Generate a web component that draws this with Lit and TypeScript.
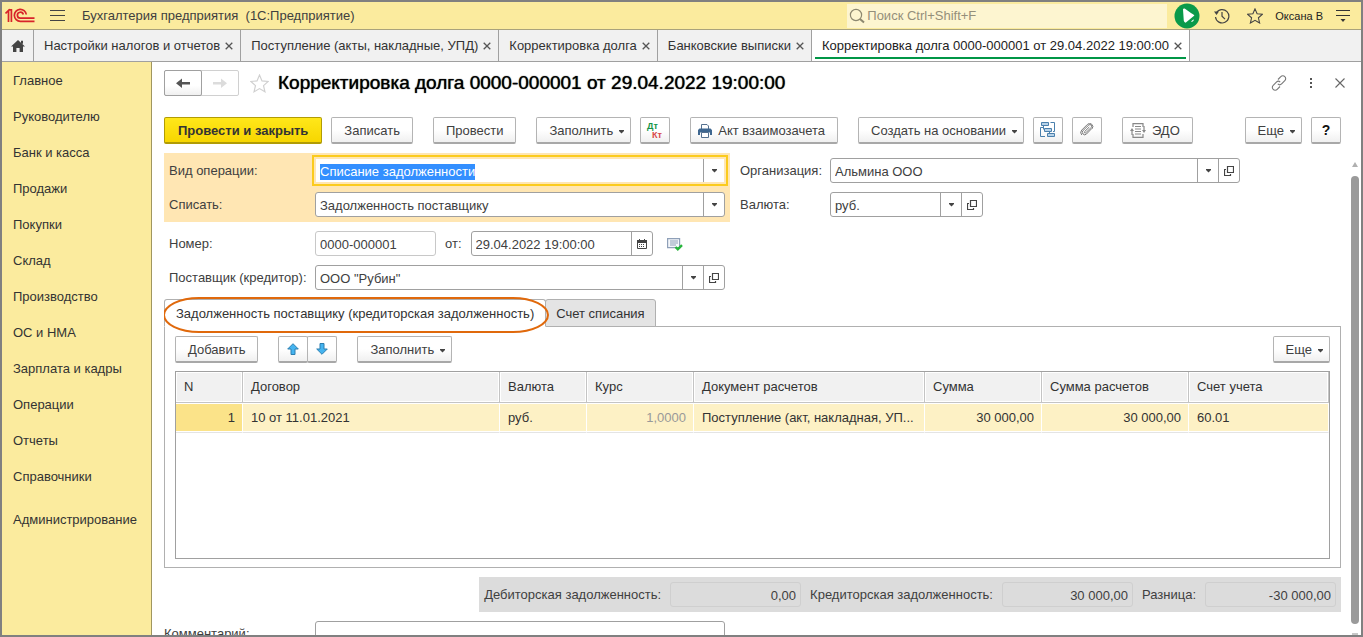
import { LitElement, html, css, svg, nothing } from "lit";
import { customElement } from "lit/decorators.js";
import { classMap } from "lit/directives/class-map.js";

const sections = [
  "Главное", "Руководителю", "Банк и касса", "Продажи", "Покупки", "Склад",
  "Производство", "ОС и НМА", "Зарплата и кадры", "Операции", "Отчеты",
  "Справочники", "Администрирование",
];

const windows = [
  "Настройки налогов и отчетов",
  "Поступление (акты, накладные, УПД)",
  "Корректировка долга",
  "Банковские выписки",
  "Корректировка долга 0000-000001 от 29.04.2022 19:00:00",
];

const columns = [
  { key: "n", title: "N" },
  { key: "contract", title: "Договор" },
  { key: "currency", title: "Валюта" },
  { key: "rate", title: "Курс" },
  { key: "doc", title: "Документ расчетов" },
  { key: "sum", title: "Сумма" },
  { key: "settle", title: "Сумма расчетов" },
  { key: "account", title: "Счет учета" },
];

const rows: Record<string, string>[] = [
  {
    n: "1",
    contract: "10 от 11.01.2021",
    currency: "руб.",
    rate: "1,0000",
    doc: "Поступление (акт, накладная, УП...",
    sum: "30 000,00",
    settle: "30 000,00",
    account: "60.01",
  },
];

const icon = (w: number, h: number, body: unknown) =>
  html`<svg width=${w} height=${h} viewBox="0 0 ${w} ${h}" fill="none" aria-hidden="true">${body}</svg>`;

const caret = icon(5, 4, svg`<path d="M0 0h5v1L2.5 3.5 0 1z" fill="#444"/>`);
const cross = icon(8, 8, svg`<path d="M.7.7l6.6 6.6M7.3.7L.7 7.3" stroke="#555" stroke-width="1.3"/>`);
const openIcon = icon(10, 10, svg`<path d="M3.5.5h6v6h-6zM2 3.5H.5v6h6V8" stroke="#444" stroke-width="1.2"/>`);
const calendarIcon = icon(10, 10, svg`<path d="M.5 2h9v7.5h-9z" stroke="#444"/><path d="M0 1h10v3H0zM2 0h1v2H2zM7 0h1v2H7z" fill="#444"/><path d="M2 5.5h6M2 7.5h6" stroke="#444" stroke-dasharray="1 1"/>`);
const starPath = "M8 .9l2.1 4.9 5.2.5-3.9 3.5 1.2 5.2L8 12.3l-4.6 2.7 1.2-5.2L.7 6.3l5.2-.5z";

@customElement("app-root")
export class AppRoot extends LitElement {
  static styles = css`
    :host {
      display: block;
      font: 13px/16px "Liberation Sans", Arial, sans-serif;
      color: #404040;
    }
    * { box-sizing: border-box; }
    button, input { font: inherit; color: inherit; margin: 0; }
    button { padding: 0; background: none; border: 0; cursor: pointer; }
    a { color: inherit; text-decoration: none; }
    svg { display: block; flex: none; }

    .window {
      display: flex;
      flex-direction: column;
      height: 100vh;
      border: 2px solid #808080;
      background: #fff;
      overflow: hidden;
    }

    .titlebar {
      display: flex;
      align-items: center;
      flex: none;
      height: 28px;
      padding: 0 11px 0 3px;
      background: #fbeb9e;
      border-bottom: 1px solid #a9a27c;
    }
    .menu { margin: 0 17px 0 15px; }
    .app-name { flex: 1; white-space: pre; }
    .search {
      display: flex;
      align-items: center;
      gap: 2px;
      width: 320px;
      height: 24px;
      padding-left: 2px;
      background: #fdf5d0;
    }
    .search input {
      flex: 1;
      min-width: 0;
      padding: 0;
      border: 0;
      outline: 0;
      background: none;
    }
    .search input::placeholder { color: #948f7a; opacity: 1; }
    .system { display: flex; align-items: center; margin-left: 7px; }
    .history { margin-left: 14px; }
    .favorites { margin-left: 17px; }
    .user { margin: 0 13px 0 12px; font-size: 11px; color: #222; }

    .tabs {
      display: flex;
      flex: none;
      height: 32px;
      background: #f1f1f1;
      border-bottom: 1px solid #a0a0a0;
    }
    .home {
      display: flex;
      align-items: center;
      justify-content: center;
      width: 32px;
      border-right: 1px solid #a0a0a0;
    }
    .tab {
      display: flex;
      align-items: center;
      gap: 5px;
      padding: 0 7px 0 10px;
      border-right: 1px solid #a0a0a0;
      white-space: nowrap;
      color: #333;
    }
    .tab.active {
      background: linear-gradient(#009646, #009646) 3px 27px / calc(100% - 6px) 2px no-repeat #fff;
      color: #222;
    }

    .body { display: flex; flex: 1; min-height: 0; }
    .sections {
      display: flex;
      flex-direction: column;
      flex: none;
      width: 150px;
      padding: 1px 0 0 11px;
      background: #fbeb9e;
      border-right: 1px solid #a0965f;
    }
    .sections a { line-height: 36px; color: #333; white-space: nowrap; }
    .sections a:last-child { margin-top: 7px; }

    .form {
      display: flex;
      flex-direction: column;
      flex: 1;
      min-width: 0;
      padding: 9px 2px 0 12px;
    }
    .heading { display: flex; align-items: center; height: 24px; margin-right: 14px; }
    .nav {
      display: flex;
      margin-right: 11px;
      border: 1px solid #d0d0d0;
      border-radius: 2px;
    }
    .nav button { display: flex; align-items: center; justify-content: center; width: 36px; height: 24px; }
    .nav .back {
      width: 38px;
      margin: -1px 0 -1px -1px;
      height: 26px;
      border: 1px solid #a0a0a0;
      border-radius: 2px;
      background: linear-gradient(#fff 60%, #f0f0f0);
    }
    h1 {
      flex: 1;
      margin: 0 0 0 9px;
      font-size: 19px;
      line-height: 24px;
      font-weight: 400;
      text-shadow: 0 0 1px #000;
      color: #000;
      white-space: nowrap;
    }
    .heading .tool { margin-left: 22px; }

    .bar { display: flex; align-items: center; gap: 20px; }
    .commands { margin: 22px 18px 9px 0; }
    .group { display: flex; gap: 9px; }
    .push { margin-left: auto; }
    .btn {
      display: flex;
      align-items: center;
      justify-content: center;
      gap: 6px;
      height: 27px;
      padding: 1px 12px 0;
      border: 1px solid #b4b4b4;
      border-bottom: 2px solid #a8a8a8;
      border-radius: 2px;
      background: linear-gradient(#fff 50%, #f0f0f0);
      white-space: nowrap;
    }
    .btn.drop { padding-right: 6px; }
    .btn.drop svg { margin-top: 3px; }
    .btn.pictured { padding-left: 7px; }
    .btn.square { width: 30px; padding: 0; font-size: 14px; font-weight: 700; color: #111; }
    .btn.primary {
      padding: 1px 13px 0;
      border-color: #b19c05;
      background: linear-gradient(#ffe71a, #f7d600);
      font-weight: 700;
      color: #333;
    }
    .posting { font: 700 9px "Liberation Sans", Arial, sans-serif; }
    .moves { display: flex; }
    .moves .btn + .btn { margin-left: -1px; }

    .scroller { display: flex; flex: 1; min-height: 0; }
    .content { flex: 1; min-width: 0; overflow: hidden; }
    .scrollbar {
      display: flex;
      flex-direction: column;
      align-items: center;
      gap: 9px;
      flex: none;
      width: 8px;
      margin-left: 10px;
      padding-top: 9px;
    }
    .thumb { flex: 1; width: 8px; border-radius: 4px; background: #9a9a9a; }

    .fields { display: grid; grid-template-columns: 566px minmax(0, 500px); gap: 4px 10px; }
    .block { display: grid; gap: 9px; padding: 5px; }
    .block.marked { background: #ffe6b3; }
    .block.side { padding: 5px 0; }
    .line { display: grid; grid-template-columns: 146px minmax(0, 1fr); align-items: center; }
    .side .line { grid-template-columns: 90px minmax(0, 1fr); }
    .input {
      display: flex;
      height: 25px;
      border: 1px solid #a0a0a0;
      border-radius: 3px;
      background: #fff;
    }
    .input input {
      flex: 1;
      width: 0;
      min-width: 0;
      padding: 2px 4px 0;
      border: 0;
      outline: 0;
      background: none;
    }
    .input input::selection { background: #338fff; color: #fff; }
    .input button {
      display: flex;
      align-items: center;
      justify-content: center;
      width: 21px;
      border-left: 1px solid #a0a0a0;
    }
    .input.focused { border-color: #ffe6b3; border-radius: 0; outline: 2px solid #fbcb1d; outline-offset: 1px; }
    .input.locked { border-color: #c8c8c8; }
    .input.short { width: 153px; }
    .number { display: flex; align-items: center; }
    .number .locked { width: 121px; }
    .number label { margin: 0 9px; }
    .number .date { width: 182px; margin-right: 14px; }

    .pages { display: flex; margin-top: 4px; }
    .page {
      height: 28px;
      padding: 1px 11px 0;
      border: 1px solid #b0b0b0;
      border-radius: 3px 3px 0 0;
      background: #e4e4e4;
      color: #333;
      white-space: nowrap;
    }
    .page + .page { margin-left: -1px; padding: 1px 10px 0; }
    .page.current { position: relative; background: #fff; border-bottom-color: #fff; }
    .marker {
      position: absolute;
      inset: -3px -4px -7px -2px;
      border: 2px solid #e0690c;
      border-radius: 36px / 18px;
      pointer-events: none;
    }
    .panel { margin-top: -1px; padding: 9px 10px 8px; border: 1px solid #b0b0b0; }
    .grid { height: 188px; margin-top: 8px; border: 1px solid #a0a0a0; overflow: hidden; }
    table { width: 100%; border-collapse: separate; border-spacing: 0; table-layout: fixed; }
    th, td {
      padding: 0 7px 0 8px;
      overflow: hidden;
      text-overflow: ellipsis;
      white-space: nowrap;
      font-weight: 400;
      text-align: left;
      color: #333;
    }
    th {
      height: 31px;
      background: #f1f1f1;
      border-right: 1px solid #c4c4c4;
      border-bottom: 1px solid #c4c4c4;
      box-shadow: inset 0 0 0 1px #fff;
    }
    td {
      height: 30px;
      background: #fdf1c5;
      border-right: 1px solid #fff;
      border-bottom: 1px solid #e4e4e4;
      box-shadow: inset 0 1px #fff, inset 0 -1px #fff;
    }
    td.n { background: #fbe389; }
    td.n, td.rate, td.sum, td.settle { text-align: right; }
    td.rate { color: #999; }
    th.n { width: 67px; }
    th.contract { width: 257px; }
    th.currency { width: 87px; }
    th.rate { width: 107px; }
    th.doc { width: 231px; }
    th.sum { width: 117px; }
    th.settle { width: 147px; }

    .totals {
      display: flex;
      align-items: center;
      gap: 9px;
      width: max-content;
      height: 35px;
      margin: 9px 0 9px auto;
      padding: 0 5px;
      background: #dcdcdc;
    }
    .totals .input { width: 131px; border-color: #cfcfcf; background: none; }
    .totals input { text-align: right; }
    .comment { width: 561px; grid-template-columns: 151px minmax(0, 1fr); }
  `;

  firstUpdated() {
    const field = this.renderRoot.querySelector<HTMLInputElement>("#operation");
    field?.focus();
    field?.select();
  }

  private field(id: string, value: string, buttons: string[] = [], cls = "") {
    return html`<div class="input ${cls}">
      <input id=${id} type="text" autocomplete="off" .value=${value} ?readonly=${cls === "locked"} />
      ${buttons.map((b) =>
        b === "drop"
          ? html`<button aria-label="Выбрать">${caret}</button>`
          : b === "open"
            ? html`<button aria-label="Открыть">${openIcon}</button>`
            : html`<button aria-label="Календарь">${calendarIcon}</button>`)}
    </div>`;
  }

  private line(id: string, label: string, value: string, buttons: string[], cls = "") {
    return html`<div class="line"><label for=${id}>${label}</label>${this.field(id, value, buttons, cls)}</div>`;
  }

  private titlebar() {
    return html`<header class="titlebar">
      ${icon(30, 16, svg`<path d="M.5 5.500L3.500 2.500V14M3.500 1.800h2.900V14" stroke="#d8232a" stroke-width="1.700"/>
        <path d="M21.300 6.500A6 6 0 1 0 15.300 13.300H29.500" stroke="#d8232a" stroke-width="1.700"/>
        <path d="M18.300 6.500A3 3 0 1 0 15.300 10.200H29.500" stroke="#d8232a" stroke-width="1.700"/>`)}
      <button class="menu" aria-label="Главное меню">${icon(15, 11, svg`<path d="M0 .5h15M0 5.500h15M0 10.500h15" stroke="#444"/>`)}</button>
      <span class="app-name">Бухгалтерия предприятия  (1С:Предприятие)</span>
      <label class="search">
        ${icon(16, 16, svg`<circle cx="7" cy="7" r="5.6" stroke="#8d8870" stroke-width="1.2"/><path d="M11 11l4 3.6" stroke="#8d8870" stroke-width="2"/>`)}
        <input type="search" placeholder="Поиск Ctrl+Shift+F" aria-label="Поиск" />
      </label>
      <div class="system">
        <button aria-label="Обсуждения">${icon(26, 26, svg`<circle cx="13" cy="13" r="12.500" fill="#0a9a4a"/><path d="M9 6.200c.2-1 1.400-1 2-.4l6.300 4.400c1.300.8 2.200 1 3.100 2.200l-8.800 7.300c-1.300-.7-2-1.600-1.900-3.200z" fill="#fff"/><path d="M17 18.500l2.600-2.300c.5 1.500-1 3-2.600 2.300z" fill="#fff"/>`)}</button>
        <button class="history" aria-label="История">${icon(16, 16, svg`<path d="M2.200 5.200A6.700 6.700 0 1 1 1.500 9" stroke="#444" stroke-width="1.200"/><path d="M0 3.500h5L2.500 7z" fill="#444"/><path d="M8 4v4.200l3 3" stroke="#444" stroke-width="1.200"/>`)}</button>
        <button class="favorites" aria-label="Избранное">${icon(16, 16, svg`<path d=${starPath} stroke="#444" stroke-width="1.100"/>`)}</button>
        <a class="user" href="#user">Оксана В</a>
        <button aria-label="Сервис">${icon(14, 14, svg`<path d="M0 1.500h14M0 6.500h14" stroke="#333"/><path d="M4.500 10h5L7 13z" fill="#333"/>`)}</button>
      </div>
    </header>`;
  }

  render() {
    return html`<div class="window">
      ${this.titlebar()}
      <nav class="tabs" aria-label="Открытые окна">
        <a class="home" href="#home" aria-label="Начальная страница">${icon(14, 12, svg`<path d="M7 0l7 6.600h-2V12H8.600V8H5.400v4H2V6.600H0z" fill="#444"/><path d="M10 .8h2v3h-2z" fill="#444"/>`)}</a>
        ${windows.map((title, i) => html`<div class=${classMap({ tab: true, active: i === windows.length - 1 })}>
          <a href="#w${i}">${title}</a><button aria-label="Закрыть">${cross}</button>
        </div>`)}
      </nav>
      <div class="body">
        <nav class="sections" aria-label="Разделы">${sections.map((s, i) => html`<a href="#s${i}">${s}</a>`)}</nav>
        <main class="form">
          <div class="heading">
            <div class="nav">
              <button class="back" aria-label="Назад">${icon(14, 10, svg`<path d="M14 4v2.400H6V10L0 5.200 6 .4V4z" fill="#555"/>`)}</button>
              <button aria-label="Вперед">${icon(14, 10, svg`<path d="M0 4v2.400h8V10l6-4.800L8 .4V4z" fill="#dcdcdc"/>`)}</button>
            </div>
            <button aria-label="В избранное"><svg width="19" height="19" viewBox="0 0 16 16" fill="none" aria-hidden="true"><path d=${starPath} stroke="#d0d0d0" stroke-width="1"/></svg></button>
            <h1>Корректировка долга 0000-000001 от 29.04.2022 19:00:00</h1>
            <button class="tool" aria-label="Ссылка">${icon(16, 16, svg`<path d="M7 4.500l2.800-2.800a2.700 2.700 0 0 1 4 0 2.700 2.700 0 0 1 0 4L10.600 8.900a2.700 2.700 0 0 1-3.800 0M9 11.500l-2.800 2.800a2.700 2.700 0 0 1-4 0 2.700 2.700 0 0 1 0-4L5.400 7.100a2.700 2.700 0 0 1 3.800 0" stroke="#777" stroke-width="1.100"/>`)}</button>
            <button class="tool" aria-label="Меню">${icon(4, 12, svg`<path d="M1 1h2v2H1zM1 5h2v2H1zM1 9h2v2H1z" fill="#555"/>`)}</button>
            <button class="tool" aria-label="Закрыть">${icon(10, 10, svg`<path d="M.5.5l9 9M9.500.5l-9 9" stroke="#666" stroke-width="1.100"/>`)}</button>
          </div>

          <div class="bar commands">
            <div class="group"><button class="btn primary">Провести и закрыть</button><button class="btn">Записать</button></div>
            <button class="btn">Провести</button>
            <div class="group">
              <button class="btn drop">Заполнить ${caret}</button>
              <button class="btn square" aria-label="Показать проводки"><svg class="posting" width="18" height="18" viewBox="0 0 18 18" aria-hidden="true"><text x="1" y="8" fill="#159447">Дт</text><text x="6" y="17" fill="#d94848">Кт</text></svg></button>
            </div>
            <button class="btn pictured">${icon(14, 14, svg`<path d="M3.500 5V.5H9L10.500 2v3" fill="#fff" stroke="#55708f"/><path d="M1.500 4.500h11L14 6v5h-2V8.500H2V11H0V6z" fill="#3f6790"/><path d="M3.500 8.500h7v5h-7z" fill="#fff" stroke="#55708f"/>`)} Акт взаимозачета</button>
            <div class="group">
              <button class="btn drop">Создать на основании ${caret}</button>
              <button class="btn square" aria-label="Структура подчиненности">${icon(16, 16, svg`<path d="M1.500.5h7v3h-7zM4.500 6.500h7v3h-7zM7.500 11.500h7v3h-7z" fill="#b7d2e8" stroke="#4a80ad"/><path d="M3 5.500H.5v9H5M10.500 .5h4v9H13" stroke="#4a80ad"/><path d="M3.500 4v3.500M9.500 10v1.500" stroke="#4a80ad"/>`)}</button>
              <button class="btn square" aria-label="Файлы">${icon(14, 14, svg`<path d="M11.800 5.500L6.500 11a2.400 2.400 0 0 1-3.500 0 2.400 2.400 0 0 1 0-3.400L8.800 2a1.700 1.700 0 0 1 2.400 2.400L5.800 9.800a.8.8 0 0 1-1.200-1.200L9.300 4M12 5.800a3.300 3.300 0 0 0-.2-4.500 3.200 3.200 0 0 0-4.500.2L1.800 7a3.600 3.600 0 0 0 0 5" stroke="#777"/>`)}</button>
            </div>
            <button class="btn pictured">${icon(16, 15, svg`<path d="M3 4V.7h10V4M3 11v3.300h10V11" stroke="#888" stroke-width="1.200"/><path d="M5 3.500h6M5 6h6M5 8.500h6M5 11h6" stroke="#888"/><path d="M2 12V7M14 3v5" stroke="#888" stroke-width="1.200"/><path d="M0 8h4L2 5zM12 7h4l-2 3z" fill="#888"/>`)} ЭДО</button>
            <div class="group push"><button class="btn drop">Еще ${caret}</button><button class="btn square">?</button></div>
          </div>

          <div class="scroller">
            <div class="content">
              <div class="fields">
                <div class="block marked">
                  ${this.line("operation", "Вид операции:", "Списание задолженности", ["drop"], "focused")}
                  ${this.line("writeoff", "Списать:", "Задолженность поставщику", ["drop"])}
                </div>
                <div class="block side">
                  ${this.line("org", "Организация:", "Альмина ООО", ["drop", "open"], "org")}
                  ${this.line("currency", "Валюта:", "руб.", ["drop", "open"], "short")}
                </div>
                <div class="block">
                  <div class="line">
                    <label for="number">Номер:</label>
                    <div class="number">
                      ${this.field("number", "0000-000001", [], "locked")}
                      <label for="date">от:</label>
                      ${this.field("date", "29.04.2022 19:00:00", ["calendar"], "date")}
                      ${icon(16, 14, svg`<path d="M.6 1.600h12v9H.6z" fill="#f4f7fb" stroke="#8fa0b8" stroke-width="1.200"/><path d="M3 4h8M3 6h8M3 8h6" stroke="#8fa0b8"/><path d="M8.500 10l2.300 2.300L15 8.200" stroke="#27b53c" stroke-width="2.400"/>`)}
                    </div>
                  </div>
                  ${this.line("vendor", "Поставщик (кредитор):", "ООО \"Рубин\"", ["drop", "open"])}
                </div>
              </div>

              <div class="pages" role="tablist">
                <button class="page current" role="tab" aria-selected="true">Задолженность поставщику (кредиторская задолженность)<span class="marker"></span></button>
                <button class="page" role="tab" aria-selected="false">Счет списания</button>
              </div>
              <section class="panel">
                <div class="bar">
                  <button class="btn">Добавить</button>
                  <div class="moves">
                    <button class="btn square" aria-label="Вверх">${icon(12, 12, svg`<path d="M6 .7l5.300 5.300H8v5.500H4V6H.7z" fill="#45b4f0" stroke="#2c7fb0"/>`)}</button>
                    <button class="btn square" aria-label="Вниз">${icon(12, 12, svg`<path d="M6 11.300L11.300 6H8V.5H4V6H.7z" fill="#45b4f0" stroke="#2c7fb0"/>`)}</button>
                  </div>
                  <button class="btn drop">Заполнить ${caret}</button>
                  <button class="btn drop push">Еще ${caret}</button>
                </div>
                <div class="grid">
                  <table>
                    <thead><tr>${columns.map((c) => html`<th class=${c.key}>${c.title}</th>`)}</tr></thead>
                    <tbody>${rows.map((r) => html`<tr>${columns.map((c) => html`<td class=${c.key}>${r[c.key] ?? nothing}</td>`)}</tr>`)}</tbody>
                  </table>
                </div>
              </section>

              <div class="totals">
                <label for="debit">Дебиторская задолженность:</label>${this.field("debit", "0,00")}
                <label for="credit">Кредиторская задолженность:</label>${this.field("credit", "30 000,00")}
                <label for="diff">Разница:</label>${this.field("diff", "-30 000,00")}
              </div>
              <div class="line comment"><label for="comment">Комментарий:</label>${this.field("comment", "")}</div>
            </div>
            <div class="scrollbar">
              ${icon(6, 5, svg`<path d="M3 0l3 5H0z" fill="#b0b0b0"/>`)}
              <div class="thumb"></div>
              ${icon(6, 2, svg`<path d="M0 0h6v2H0z" fill="#c8c8c8"/>`)}
            </div>
          </div>
        </main>
      </div>
    </div>`;
  }
}
